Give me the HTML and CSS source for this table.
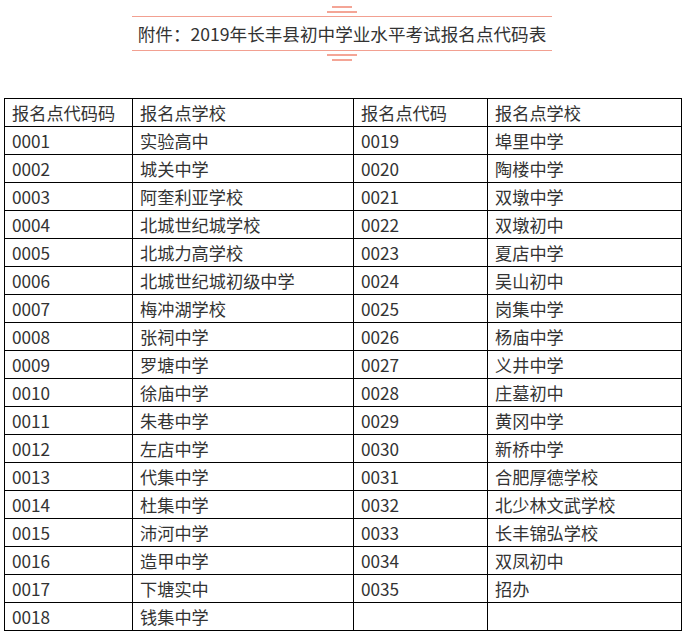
FILE: index.html
```html
<!DOCTYPE html>
<html lang="zh">
<head>
<meta charset="utf-8">
<link rel="stylesheet" href="styles.css">
</head>
<body>
<div class="head">
  <div class="deco deco-top"><span class="bar short"></span><span class="bar long"></span></div>
  <div class="title">附件：2019年长丰县初中学业水平考试报名点代码表</div>
  <div class="deco deco-bottom"><span class="bar long"></span><span class="bar short"></span></div>
</div>
<table class="codes">
  <colgroup><col class="c1"><col class="c2"><col class="c3"><col class="c4"></colgroup>
  <tr><td>报名点代码码</td><td>报名点学校</td><td>报名点代码</td><td>报名点学校</td></tr>
  <tr><td>0001</td><td>实验高中</td><td>0019</td><td>埠里中学</td></tr>
  <tr><td>0002</td><td>城关中学</td><td>0020</td><td>陶楼中学</td></tr>
  <tr><td>0003</td><td>阿奎利亚学校</td><td>0021</td><td>双墩中学</td></tr>
  <tr><td>0004</td><td>北城世纪城学校</td><td>0022</td><td>双墩初中</td></tr>
  <tr><td>0005</td><td>北城力高学校</td><td>0023</td><td>夏店中学</td></tr>
  <tr><td>0006</td><td>北城世纪城初级中学</td><td>0024</td><td>吴山初中</td></tr>
  <tr><td>0007</td><td>梅冲湖学校</td><td>0025</td><td>岗集中学</td></tr>
  <tr><td>0008</td><td>张祠中学</td><td>0026</td><td>杨庙中学</td></tr>
  <tr><td>0009</td><td>罗塘中学</td><td>0027</td><td>义井中学</td></tr>
  <tr><td>0010</td><td>徐庙中学</td><td>0028</td><td>庄墓初中</td></tr>
  <tr><td>0011</td><td>朱巷中学</td><td>0029</td><td>黄冈中学</td></tr>
  <tr><td>0012</td><td>左店中学</td><td>0030</td><td>新桥中学</td></tr>
  <tr><td>0013</td><td>代集中学</td><td>0031</td><td>合肥厚德学校</td></tr>
  <tr><td>0014</td><td>杜集中学</td><td>0032</td><td>北少林文武学校</td></tr>
  <tr><td>0015</td><td>沛河中学</td><td>0033</td><td>长丰锦弘学校</td></tr>
  <tr><td>0016</td><td>造甲中学</td><td>0034</td><td>双凤初中</td></tr>
  <tr><td>0017</td><td>下塘实中</td><td>0035</td><td>招办</td></tr>
  <tr><td>0018</td><td>钱集中学</td><td></td><td></td></tr>
</table>
</body>
</html>
```

FILE: styles.css
```css
html, body {
  margin: 0;
  padding: 0;
  background: #fff;
}
body {
  font-family: "Noto Sans CJK SC", "Noto Sans", sans-serif;
  color: #333;
}
.head {
  width: 420px;
  margin-left: 132px;
  display: flex;
  flex-direction: column;
  align-items: center;
}
.deco {
  width: 100%;
  display: flex;
  flex-direction: column;
  align-items: center;
}
.deco-top {
  padding-top: 6px;
  border-bottom: 1px solid #f2a091;
  padding-bottom: 3px;
  gap: 3px;
}
.deco-bottom {
  border-top: 1px solid #f2a091;
  padding-top: 3px;
  gap: 3px;
}
.bar {
  display: block;
  height: 2px;
  background: #f4a596;
}
.bar.short { width: 20px; }
.bar.long { width: 30px; }
.title {
  height: 33px;
  line-height: 33px;
  font-size: 17.6px;
  white-space: nowrap;
  color: #333;
}
.codes {
  margin-top: 37px;
  margin-left: 4px;
  border-collapse: collapse;
  table-layout: fixed;
  width: 677px;
  font-size: 17.2px;
}
.c1 { width: 128px; }
.c2 { width: 221px; }
.c3 { width: 134px; }
.c4 { width: 194px; }
.codes td {
  border: 1px solid #000;
  height: 27px;
  padding: 0 0 0 7px;
  line-height: 27px;
  white-space: nowrap;
  overflow: hidden;
  color: #333;
}
```
